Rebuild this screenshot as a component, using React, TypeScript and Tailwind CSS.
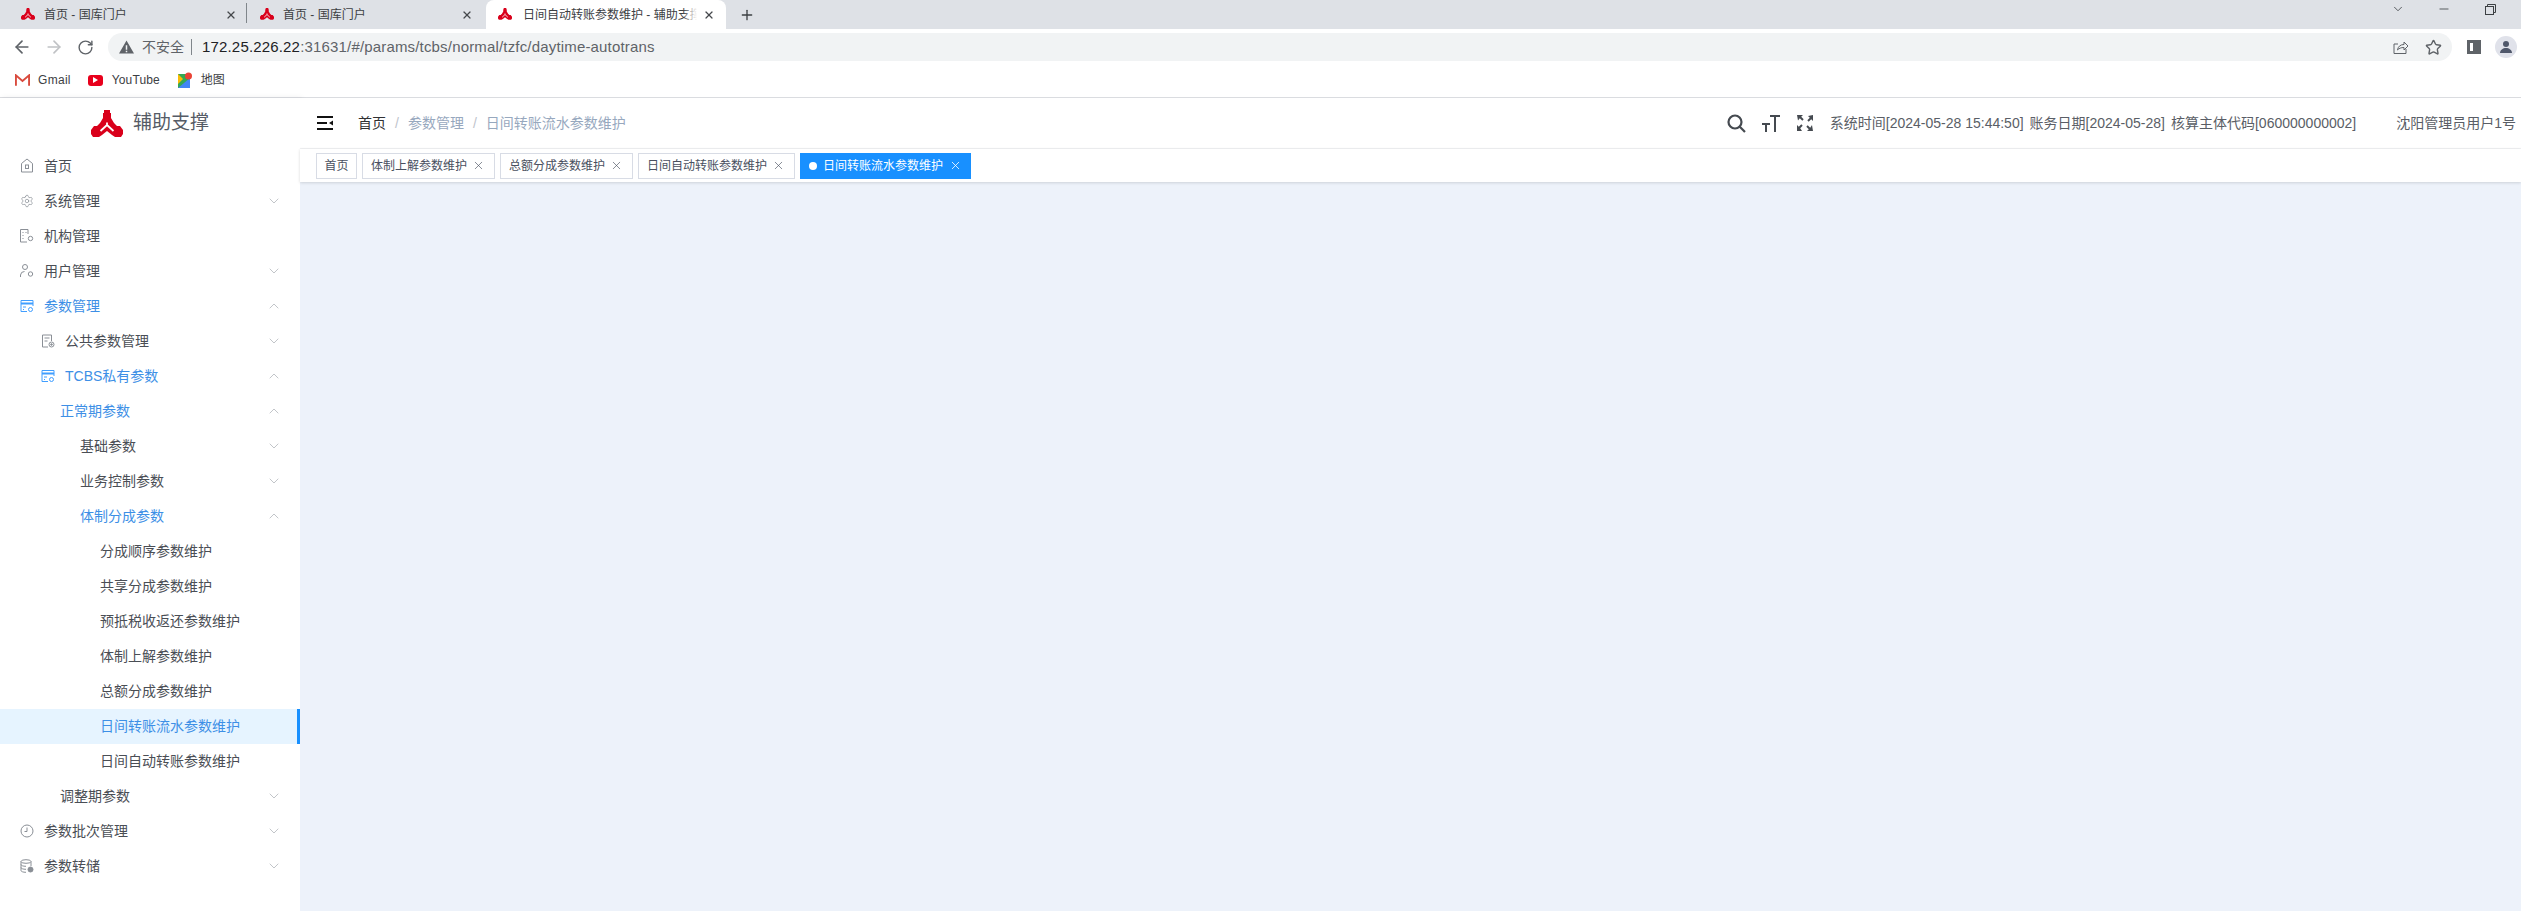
import React from 'react';
import { ArrowLeft, ArrowRight, RotateCw, X, Plus, ChevronDown, ChevronUp, Star, Minus, Settings } from 'lucide-react';

const FONT = "font-['Liberation_Sans','Noto_Sans_CJK_SC',sans-serif]";

const BankLogo = ({ size = 16 }: { size?: number }) => (
  <svg width={size} height={size * 0.875} viewBox="0 0 32 28">
    <path
      fill="#d9001b"
      d="M13 0h6v3h1v5l3 5 3 3h3l3 4v4l-2 3h-6l-3-2-5-4-5 4-3 2H2l-2-3v-4l3-4h3l3-3 3-5V3h1z"
    />
    <path d="M16 12.500v2.500M16 15l-6.500 6M16 15l6.500 6" stroke="#fff" strokeWidth="1.800" fill="none" />
    <path d="M14.500 27l1.500-3 1.500 3z" fill="#fff" />
  </svg>
);

type IconProps = { color: string };

const HomeIcon = ({ color }: IconProps) => (
  <svg width="14" height="15" viewBox="0 0 14 15" fill="none" stroke={color} strokeWidth="1">
    <path d="M1.500 5.500L7 1l5.500 4.500V14h-11z" />
    <rect x="5.500" y="7" width="3" height="3.500" />
  </svg>
);
const GearIcon = ({ color }: IconProps) => <Settings size={14} strokeWidth={1.2} color={color} />;
const OrgIcon = ({ color }: IconProps) => (
  <svg width="14" height="14" viewBox="0 0 14 14" fill="none" stroke={color} strokeWidth="1">
    <path d="M7 13H.5V.5h7.500V5" />
    <path d="M2.500 3.500h1M5.500 3.500h1M2.500 6.500h1M2.500 9.500h1" />
    <circle cx="10.500" cy="9.500" r="2.200" />
  </svg>
);
const UserIcon = ({ color }: IconProps) => (
  <svg width="14" height="14" viewBox="0 0 14 14" fill="none" stroke={color} strokeWidth="1">
    <circle cx="5" cy="3" r="2.500" />
    <path d="M.5 13V11a4 4 0 0 1 4-3.500" />
    <circle cx="10.500" cy="10" r="2.200" />
  </svg>
);
const ParamIcon = ({ color }: IconProps) => (
  <svg width="14" height="14" viewBox="0 0 14 14" fill="none" stroke={color} strokeWidth="1">
    <path d="M7 12.500H1v-11h12V7" />
    <path d="M1 4.500h12" strokeWidth="2" />
    <path d="M3 8h3M3 10.500h1" />
    <circle cx="10.500" cy="10.500" r="2" />
  </svg>
);
const PublicIcon = ({ color }: IconProps) => (
  <svg width="14" height="14" viewBox="0 0 14 14" fill="none" stroke={color} strokeWidth="1">
    <path d="M7 13H1.500V1h9v6" />
    <path d="M3.500 4h5M3.500 7h3" />
    <circle cx="10.500" cy="10.500" r="2.500" />
    <circle cx="10.500" cy="10.500" r=".8" fill={color} />
  </svg>
);
const ClockIcon = ({ color }: IconProps) => (
  <svg width="14" height="14" viewBox="0 0 14 14" fill="none" stroke={color} strokeWidth="1">
    <circle cx="7" cy="7" r="6" />
    <path d="M7 3.500V7.500H4.500" />
  </svg>
);
const DbIcon = ({ color }: IconProps) => (
  <svg width="14" height="14" viewBox="0 0 14 14" fill="none" stroke={color} strokeWidth="1">
    <ellipse cx="6" cy="2.500" rx="5" ry="1.800" />
    <path d="M1 2.500v9c0 1 2 1.800 5 1.800M11 2.500V7M1 5.500c0 1 2 1.800 5 1.800M1 8.500c0 1 2 1.800 5 1.800" />
    <circle cx="10.500" cy="10.500" r="2.500" fill={color} />
  </svg>
);

type MenuRow = {
  label: string;
  pl: string;
  Icon?: React.FC<IconProps>;
  arrow?: 'up' | 'down';
  blue?: boolean;
  selected?: boolean;
};

const rows: MenuRow[] = [
  { label: '首页', pl: 'pl-[20px]', Icon: HomeIcon },
  { label: '系统管理', pl: 'pl-[20px]', Icon: GearIcon, arrow: 'down' },
  { label: '机构管理', pl: 'pl-[20px]', Icon: OrgIcon },
  { label: '用户管理', pl: 'pl-[20px]', Icon: UserIcon, arrow: 'down' },
  { label: '参数管理', pl: 'pl-[20px]', Icon: ParamIcon, arrow: 'up', blue: true },
  { label: '公共参数管理', pl: 'pl-[41px]', Icon: PublicIcon, arrow: 'down' },
  { label: 'TCBS私有参数', pl: 'pl-[41px]', Icon: ParamIcon, arrow: 'up', blue: true },
  { label: '正常期参数', pl: 'pl-[60px]', arrow: 'up', blue: true },
  { label: '基础参数', pl: 'pl-[80px]', arrow: 'down' },
  { label: '业务控制参数', pl: 'pl-[80px]', arrow: 'down' },
  { label: '体制分成参数', pl: 'pl-[80px]', arrow: 'up', blue: true },
  { label: '分成顺序参数维护', pl: 'pl-[100px]' },
  { label: '共享分成参数维护', pl: 'pl-[100px]' },
  { label: '预抵税收返还参数维护', pl: 'pl-[100px]' },
  { label: '体制上解参数维护', pl: 'pl-[100px]' },
  { label: '总额分成参数维护', pl: 'pl-[100px]' },
  { label: '日间转账流水参数维护', pl: 'pl-[100px]', blue: true, selected: true },
  { label: '日间自动转账参数维护', pl: 'pl-[100px]' },
  { label: '调整期参数', pl: 'pl-[60px]', arrow: 'down' },
  { label: '参数批次管理', pl: 'pl-[20px]', Icon: ClockIcon, arrow: 'down' },
  { label: '参数转储', pl: 'pl-[20px]', Icon: DbIcon, arrow: 'down' },
];

const tags = ['体制上解参数维护', '总额分成参数维护', '日间自动转账参数维护'];

const ChromeBar = () => (
  <div className="flex h-[98px] flex-col">
    <div className="flex h-[29px] items-stretch bg-[#dee1e6]">
      <div className="relative flex w-[247px] items-center pl-[21px] pr-[10px]">
        <BankLogo size={14} />
        <span className="ml-[9px] flex-1 whitespace-nowrap text-[12px] text-[#3c4043]">首页 - 国库门户</span>
        <X size={12} strokeWidth={2.4} className="text-[#45484c]" />
        <span className="absolute right-0 top-[3px] h-[20px] w-px bg-[#80868b]" />
      </div>
      <div className="flex w-[239px] items-center pl-[13px] pr-[13px]">
        <BankLogo size={14} />
        <span className="ml-[9px] flex-1 whitespace-nowrap text-[12px] text-[#3c4043]">首页 - 国库门户</span>
        <X size={12} strokeWidth={2.4} className="text-[#45484c]" />
      </div>
      <div className="relative flex w-[240px] items-center rounded-t-[8px] bg-white pl-[12px] pr-[11px]">
        <BankLogo size={14} />
        <span className="relative ml-[11px] flex-1 overflow-hidden whitespace-nowrap text-[12px] text-[#3c4043]">
          日间自动转账参数维护 - 辅助支撑
          <span className="absolute right-0 top-0 h-full w-[14px] bg-gradient-to-r from-transparent to-white" />
        </span>
        <X size={12} strokeWidth={2.4} className="ml-[6px] text-[#45484c]" />
      </div>
      <div className="ml-[13px] flex items-center">
        <Plus size={16} strokeWidth={2} className="text-[#3c4043]" />
      </div>
      <div className="ml-auto flex items-start text-[#3c4043]">
        <ChevronDown size={14} strokeWidth={1.4} className="mt-[2px]" />
        <Minus size={14} strokeWidth={1.4} className="ml-[32px] mt-[2px]" />
        <svg className="ml-[34px] mr-[25px] mt-[4px]" width="11" height="11" viewBox="0 0 11 11" fill="none" stroke="currentColor">
          <rect x="0.500" y="2.500" width="8" height="8" />
          <path d="M2.500 2.500v-2h8v8h-2" />
        </svg>
      </div>
    </div>
    <div className="flex h-[36px] items-center bg-white">
      <ArrowLeft size={20} strokeWidth={2} className="ml-[12px] text-[#5f6368]" />
      <ArrowRight size={20} strokeWidth={2} className="ml-[12px] text-[#c0c2c5]" />
      <RotateCw size={17} strokeWidth={2} className="ml-[13px] text-[#5f6368]" />
      <div className="ml-[14px] flex h-[28px] flex-1 items-center rounded-full bg-[#f1f3f4] pl-[11px] pr-[10px]">
        <svg width="15" height="14" viewBox="0 0 16 14" fill="#5f6368">
          <path d="M8 0l8 14H0zM7.200 5v5h1.600V5zm0 6v1.500h1.600V11z" fillRule="evenodd" />
        </svg>
        <span className="ml-[8px] text-[14px] text-[#5f6368]">不安全</span>
        <span className="ml-[7px] h-[16px] w-px bg-[#80868b]" />
        <span className="ml-[10px] text-[15px] tracking-[0.17px] text-[#202124]">172.25.226.22</span>
        <span className="text-[15px] tracking-[0.17px] text-[#5f6368]">:31631/#/params/tcbs/normal/tzfc/daytime-autotrans</span>
        <svg className="ml-auto text-[#5f6368]" width="16" height="16" viewBox="0 0 16 16" fill="none" stroke="currentColor">
          <path d="M13 10v4.500H1V5h4" />
          <path d="M4.500 11c.5-3.500 3-5.500 6.500-5.500V3l4 4-4 4V8.500c-3 0-5 .8-6.500 2.500z" />
        </svg>
        <Star size={17} strokeWidth={2} className="ml-[16px] text-[#5f6368]" />
      </div>
      <div className="ml-[15px] h-[14px] w-[14px] border-[3px] border-r-[8px] border-[#5f6368] bg-white" />
      <div className="ml-[14px] mr-[4px] flex h-[22px] w-[22px] items-center justify-center rounded-full bg-[#e0e2ea]">
        <svg width="14" height="14" viewBox="0 0 14 14" fill="#50586b">
          <circle cx="7" cy="4" r="3" />
          <path d="M1 13c0-3 3-5 6-5s6 2 6 5z" />
        </svg>
      </div>
    </div>
    <div className="flex h-[33px] items-center border-b border-[#dadce0] bg-white pb-[2px] pl-[15px] text-[12px] text-[#3c4043]">
      <svg width="15" height="12" viewBox="0 0 16 12" fill="none">
        <path d="M1 12V1l7 6 7-6v11" stroke="#d94a3d" strokeWidth="2" />
      </svg>
      <span className="ml-[8px] tracking-[0.3px]">Gmail</span>
      <span className="ml-[17px] flex h-[11px] w-[15px] items-center justify-center rounded-[3px] bg-[#e8001c]">
        <span className="h-0 w-0 border-y-[3px] border-l-[5px] border-y-transparent border-l-white" />
      </span>
      <span className="ml-[9px] tracking-[0.1px]">YouTube</span>
      <svg className="ml-[18px]" width="14" height="16" viewBox="0 0 14 16">
        <rect y="2" width="12" height="14" fill="#34a853" />
        <path d="M0 16L12 6v10z" fill="#4285f4" />
        <path d="M0 2l5 5-5 5z" fill="#fbbc04" />
        <circle cx="10.500" cy="4" r="3.500" fill="#ea4335" />
      </svg>
      <span className="ml-[9px]">地图</span>
    </div>
  </div>
);

const Sidebar = () => (
  <aside className="flex w-[300px] shrink-0 flex-col bg-white shadow-[2px_0_6px_rgba(0,21,41,0.08)]">
    <div className="flex h-[51px] items-center pl-[91px]">
      <BankLogo size={32} />
      <span className="ml-[10px] text-[19px] text-[#555b66]">辅助支撑</span>
    </div>
    <nav>
      {rows.map(({ label, pl, Icon, arrow, blue, selected }) => {
        const color = blue ? '#409eff' : '#8a8f96';
        return (
          <div
            key={label}
            className={`flex h-[35px] items-center pr-[18px] text-[14px] ${pl} ${blue ? 'text-[#3d8fe6]' : 'text-[#4a4e55]'} ${selected ? 'border-r-[3px] border-[#1890ff] bg-[#e6f4ff]' : ''}`}
          >
            {Icon && (
              <span className="-mt-[2px] mr-[10px] flex">
                <Icon color={color} />
              </span>
            )}
            <span>{label}</span>
            {arrow === 'down' && <ChevronDown size={16} strokeWidth={1} className="-mt-[2px] ml-auto text-[#a3a7ad]" />}
            {arrow === 'up' && <ChevronUp size={16} strokeWidth={1} className="-mt-[2px] ml-auto text-[#a3a7ad]" />}
          </div>
        );
      })}
    </nav>
  </aside>
);

const Header = () => (
  <div className="relative z-10 flex h-[51px] items-center border-b border-[#f2f3f5] bg-white">
    <svg className="ml-[17px]" width="16" height="14" viewBox="0 0 16 14" fill="#111">
      <path d="M0 0h16v2H0zM0 6h10v2H0zM0 12h16v2H0zM16 4.500v5L12 7z" />
    </svg>
    <span className="ml-[25px] text-[14px] text-[#303133]">首页</span>
    <span className="mx-[9px] text-[14px] text-[#c0c4cc]">/</span>
    <span className="text-[14px] text-[#97a8be]">参数管理</span>
    <span className="mx-[9px] text-[14px] text-[#c0c4cc]">/</span>
    <span className="text-[14px] text-[#97a8be]">日间转账流水参数维护</span>
    <div className="ml-auto flex items-center pr-[5px] text-[14px] text-[#5a5e66]">
      <svg width="19" height="19" viewBox="0 0 19 19" fill="none" stroke="#454a50" strokeWidth="2.200">
        <circle cx="8" cy="8" r="6.500" />
        <path d="M12.800 12.800L18 18" />
      </svg>
      <svg className="ml-[16px]" width="18" height="17" viewBox="0 0 18 17" fill="#454a50">
        <path d="M0 8h8v2H5v7H3v-7H0zM8 0h10v2h-4v15h-2V2H8z" />
      </svg>
      <svg className="ml-[16px]" width="18" height="18" viewBox="0 0 18 18" fill="#454a50">
        <path d="M1 1h6L5.200 2.800l2.500 2.500-1.400 1.400-2.500-2.500L2 6.500zM17 1v6l-1.800-1.800-2.500 2.500-1.400-1.400 2.500-2.500L12 2zM1 17v-6l1.800 1.800 2.500-2.500 1.400 1.400-2.500 2.500L6 17zM17 17h-6l1.800-1.800-2.500-2.500 1.400-1.400 2.500 2.500L16 11z" />
      </svg>
      <span className="ml-[16px]">系统时间[2024-05-28 15:44:50]</span>
      <span className="ml-[6px]">账务日期[2024-05-28]</span>
      <span className="ml-[6px]">核算主体代码[060000000002]</span>
      <span className="ml-[40px]">沈阳管理员用户1号</span>
    </div>
  </div>
);

const TagBar = () => (
  <div className="relative z-10 flex h-[33px] items-center gap-[5px] bg-white pl-[16px] shadow-[0_1px_3px_rgba(0,0,0,0.12),0_0_3px_rgba(0,0,0,0.04)]">
    <div className="flex h-[26px] w-[41px] items-center justify-center border border-[#d8dce5] text-[12px] text-[#495060]">首页</div>
    {tags.map((t) => (
      <div key={t} className="flex h-[26px] items-center border border-[#d8dce5] pl-[8px] pr-[9px] text-[12px] text-[#495060]">
        {t}
        <X size={13} strokeWidth={1.2} className="ml-[5px]" />
      </div>
    ))}
    <div className="flex h-[26px] items-center bg-[#1890ff] pl-[9px] pr-[9px] text-[12px] text-white">
      <span className="mr-[6px] h-[8px] w-[8px] rounded-full bg-white" />
      日间转账流水参数维护
      <X size={13} strokeWidth={1.5} className="ml-[6px]" />
    </div>
  </div>
);

export default function App() {
  return (
    <div className={`flex h-[911px] flex-col overflow-hidden ${FONT}`}>
      <ChromeBar />
      <div className="flex min-h-0 flex-1">
        <Sidebar />
        <main className="flex min-w-0 flex-1 flex-col bg-[#edf2fa]">
          <Header />
          <TagBar />
        </main>
      </div>
    </div>
  );
}
